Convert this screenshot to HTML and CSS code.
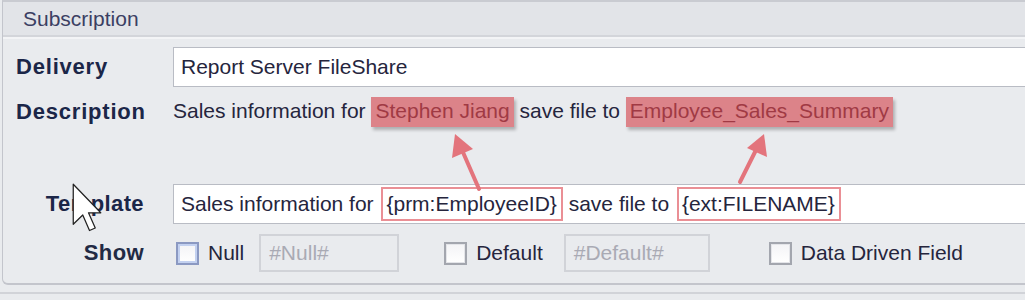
FILE: index.html
```html
<!DOCTYPE html>
<html lang="en">
<head>
  <meta charset="UTF-8">
  <meta name="viewport" content="width=device-width, initial-scale=1.0">
  <title>Subscription</title>
  <link rel="stylesheet" href="styles.css">
</head>
<body>
  <div class="panel">
    <div class="panel-header">Subscription</div>
    <div class="panel-body">
      <div class="row row-delivery">
        <span class="field-label">Delivery</span>
        <div class="text-box">Report Server FileShare</div>
      </div>
      <div class="row row-description">
        <span class="field-label">Description</span>
        <div class="desc">Sales information for <span class="hl">Stephen Jiang</span> save file to <span class="hl">Employee_Sales_Summary</span></div>
      </div>
      <div class="row row-template">
        <span class="field-label right">Template</span>
        <div class="text-box">Sales information for <span class="token">{prm:EmployeeID}</span> save file to <span class="token">{ext:FILENAME}</span></div>
      </div>
      <div class="row row-show">
        <span class="field-label right">Show</span>
        <div class="options">
          <label class="check"><span class="box focus"></span>Null</label>
          <div class="small-box">#Null#</div>
          <label class="check"><span class="box"></span>Default</label>
          <div class="small-box wide">#Default#</div>
          <label class="check"><span class="box"></span>Data Driven Field</label>
        </div>
      </div>
    </div>
  </div>
  <div class="bottom-line"></div>

  <!-- callout arrows drawn over the form -->
  <svg class="arrows" width="1025" height="300" viewBox="0 0 1025 300">
    <g stroke="#e3747c" stroke-width="4" stroke-linecap="round" fill="none">
      <line x1="479" y1="189" x2="462" y2="150"/>
      <line x1="740" y1="182" x2="756" y2="150"/>
    </g>
    <g fill="#e3747c">
      <polygon points="455,134 452,158 473,149"/>
      <polygon points="764,134 747,148 767,157"/>
    </g>
  </svg>

  <svg class="cursor" width="30" height="52" viewBox="0 0 12 20">
    <path d="M0.5,0.5 L0.5,16.5 L4.3,12.8 L7,19 L9.3,18 L6.6,11.9 L11.5,11.9 Z" fill="#fff" stroke="#222" stroke-width="0.5" stroke-linejoin="round"/>
  </svg>
</body>
</html>
```

FILE: styles.css
```css
body {
  margin: 0;
  background: #e9ebee;
  font-family: "Liberation Sans", Arial, sans-serif;
  font-size: 21px;
  color: #25253d;
  position: relative;
  height: 300px;
  overflow: hidden;
}
.panel {
  margin-left: 2px;
  border-top: 2px solid #c9cbd1;
  border-left: 1px solid #c3c5cc;
  border-bottom: 2px solid #c3c5cc;
  border-bottom-left-radius: 6px;
  height: 285px;
  box-sizing: border-box;
}
.panel-header {
  height: 33px;
  line-height: 33px;
  padding-left: 20px;
  background: #e2e4e8;
  color: #3b3f63;
  border-bottom: 2px solid #d3d5da;
  box-shadow: 0 2px 0 #f3f4f6;
}
.panel-body {
  padding-top: 10px;
}
.row {
  display: flex;
  align-items: center;
}
.field-label {
  width: 157px;
  padding-left: 13px;
  flex-shrink: 0;
  font-weight: bold;
  font-size: 22px;
  letter-spacing: 0.8px;
  color: #1b2648;
}
.field-label.right {
  text-align: right;
  padding-left: 0;
  padding-right: 29px;
  width: 141px;
  letter-spacing: 0.4px;
}
.text-box {
  flex: 1;
  height: 38px;
  line-height: 38px;
  padding-left: 7px;
  background: #fff;
  border: 1px solid #b9bcc4;
  border-right: none;
  white-space: nowrap;
}
.row-delivery {
  height: 40px;
}
.row-description {
  margin-top: 5px;
  height: 40px;
}
.desc {
  white-space: nowrap;
}
.hl {
  display: inline-block;
  padding: 2px 4px 4px;
  background: #dc8389;
  color: #a03a44;
  box-shadow: 2px 3px 3px rgba(0, 0, 0, 0.25);
}
.row-template {
  margin-top: 52px;
  height: 40px;
}
.token {
  display: inline-block;
  line-height: 30px;
  padding: 0 4px 0 3px;
  border: 2px solid #ea8f95;
  margin-left: 2px;
}
.row-show {
  margin-top: 9px;
  height: 40px;
}
.row-show .field-label {
  color: #222a44;
}
.options {
  display: flex;
  align-items: center;
  padding-left: 3px;
}
.check {
  display: flex;
  align-items: center;
  gap: 9px;
}
.box {
  width: 19px;
  height: 19px;
  border: 2px solid #a3a6ae;
  background: linear-gradient(#f4f4f6, #fff);
  box-shadow: inset 0 0 0 1px #e4e5e9;
}
.box.focus {
  border-color: #8b99c2;
  box-shadow: inset 0 0 0 2px #c3d1f0;
}
.small-box {
  width: 140px;
  height: 38px;
  line-height: 34px;
  padding-left: 8px;
  margin-left: 15px;
  margin-right: 45px;
  border: 2px solid #d1d3d8;
  box-sizing: border-box;
  color: #a9aab4;
}
.small-box.wide {
  width: 146px;
  margin-left: 21px;
  margin-right: 59px;
}
.bottom-line {
  margin-top: 7px;
  border-top: 2px solid #d1d3d8;
}
.arrows {
  position: absolute;
  left: 0;
  top: 0;
}
.cursor {
  position: absolute;
  left: 72px;
  top: 182px;
}
```
